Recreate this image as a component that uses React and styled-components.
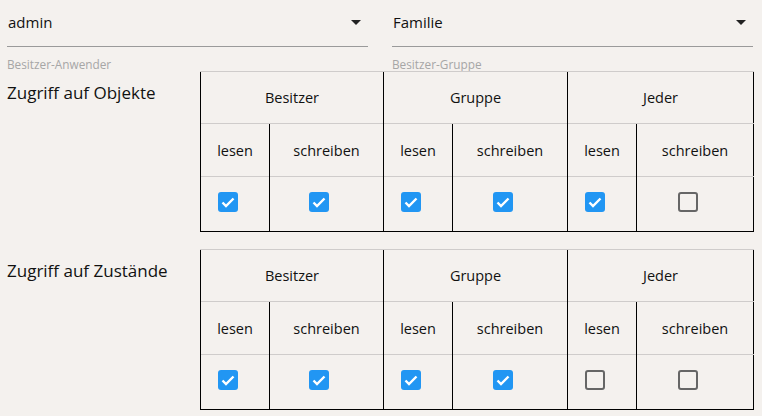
import styled, { createGlobalStyle } from "styled-components";

const GlobalStyle = createGlobalStyle`
  html, body {
    margin: 0;
    padding: 0;
    background: #f4f1ee;
  }
  body {
    font-family: "Open Sans", "Noto Sans", sans-serif;
    color: #111;
  }
`;

const Page = styled.div`
  width: 762px;
  height: 416px;
  overflow: hidden;
`;

const Header = styled.div`
  display: flex;
  gap: 24px;
  padding-left: 7px;
  height: 71px;
`;

const Field = styled.div`
  width: 361px;
  display: flex;
  flex-direction: column;
`;

const SelectBox = styled.div`
  height: 45px;
  border-bottom: 1px solid #9a9a9a;
  display: flex;
  align-items: center;
  justify-content: space-between;
  padding: 0 7px 2px 1px;
  font-size: 15px;
`;

const Arrow = styled.span`
  width: 0;
  height: 0;
  border-left: 5px solid transparent;
  border-right: 5px solid transparent;
  border-top: 5px solid #222;
`;

const Helper = styled.div`
  margin-top: 10px;
  font-size: 11.8px;
  line-height: 14px;
  color: #a6a6a6;
`;

const Section = styled.div`
  display: grid;
  grid-template-columns: 200px 553px;
  margin-bottom: 17px;
`;

const Label = styled.div`
  padding: 10px 0 0 7px;
  font-size: 17px;
`;

const Table = styled.table`
  border-collapse: collapse;
  width: 553px;
  border: 1px solid #000;
  table-layout: fixed;
  font-size: 14.5px;
`;

const Cell = styled.td`
  text-align: center;
  padding: 0;
  height: ${(p) => p.$h}px;
  border-top: 1px solid #cfcccb;
  border-left: 1px solid #000;
  padding-right: ${(p) => (p.$box ? 15 : 0)}px;
  vertical-align: middle;
`;

const Box = styled.span`
  display: inline-flex;
  align-items: center;
  justify-content: center;
  box-sizing: border-box;
  width: 20px;
  height: 20px;
  margin-bottom: 4px;
  border-radius: 3px;
  background: ${(p) => (p.$on ? "#2196f3" : "transparent")};
  border: ${(p) => (p.$on ? "none" : "2.5px solid #666")};
  vertical-align: middle;
`;

const Check = ({ on }) => (
  <Box $on={on}>
    {on && (
      <svg width="20" height="20" viewBox="0 0 20 20">
        <polyline
          points="4.5,10.5 8,14 15.5,6.5"
          fill="none"
          stroke="#fff"
          strokeWidth="2.4"
        />
      </svg>
    )}
  </Box>
);

const groups = ["Besitzer", "Gruppe", "Jeder"];

const Rights = ({ values }) => (
  <Table>
    <colgroup>
      <col style={{ width: 69 }} />
      <col style={{ width: 114 }} />
      <col style={{ width: 69 }} />
      <col style={{ width: 115 }} />
      <col style={{ width: 69 }} />
      <col style={{ width: 117 }} />
    </colgroup>
    <tbody>
      <tr>
        {groups.map((g) => (
          <Cell key={g} colSpan={2} $h={51}>
            {g}
          </Cell>
        ))}
      </tr>
      <tr>
        {groups.map((g) => [
          <Cell key={g + "l"} $h={52}>lesen</Cell>,
          <Cell key={g + "s"} $h={52}>schreiben</Cell>,
        ])}
      </tr>
      <tr>
        {values.map((v, i) => (
          <Cell key={i} $h={54} $box>
            <Check on={v} />
          </Cell>
        ))}
      </tr>
    </tbody>
  </Table>
);

const App = () => (
  <Page>
    <GlobalStyle />
    <Header>
      <Field>
        <SelectBox>
          admin
          <Arrow />
        </SelectBox>
        <Helper>Besitzer-Anwender</Helper>
      </Field>
      <Field>
        <SelectBox>
          Familie
          <Arrow />
        </SelectBox>
        <Helper>Besitzer-Gruppe</Helper>
      </Field>
    </Header>
    <Section>
      <Label>Zugriff auf Objekte</Label>
      <Rights values={[true, true, true, true, true, false]} />
    </Section>
    <Section>
      <Label>Zugriff auf Zustände</Label>
      <Rights values={[true, true, true, true, false, false]} />
    </Section>
  </Page>
);

export default App;
